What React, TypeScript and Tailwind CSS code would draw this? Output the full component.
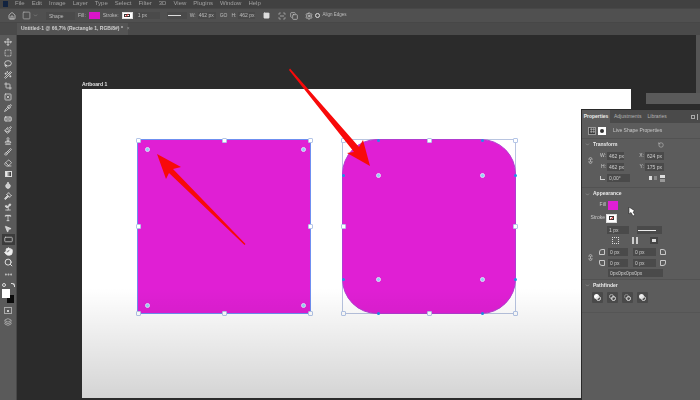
import React from "react";
import {
  Move, SquareDashed, Lasso, Wand2, Crop, SquareX, Pipette, Bandage, Paintbrush, Stamp, Brush, Eraser,
  Droplet, Gavel, Sprout, Type, MousePointer2, RectangleHorizontal, Hand, Search, MoreHorizontal,
  Home, Square, ChevronDown, Settings, RotateCcw, Link2, Layers, Frame, ScanLine, Copy,
} from "lucide-react";

const menus = ["File", "Edit", "Image", "Layer", "Type", "Select", "Filter", "3D", "View", "Plugins", "Window", "Help"];

const tools = [Move, SquareDashed, Lasso, Wand2, Crop, SquareX, Pipette, Bandage, Paintbrush, Stamp, Brush, Eraser];
const tools2 = [Droplet, Gavel, Sprout, Type, MousePointer2];

function Handle({ cls }: { cls: string }) {
  return <span className={`absolute w-[5px] h-[5px] -ml-[2.5px] -mt-[2.5px] bg-white border border-[#b4c6e8] rounded-[1px] ${cls}`} />;
}
function Dot({ cls }: { cls: string }) {
  return <span className={`absolute w-[5px] h-[5px] -ml-[2.5px] -mt-[2.5px] rounded-full bg-[#8fd0f5] border border-[#e6d8f5] ${cls}`} />;
}
function Blue({ cls }: { cls: string }) {
  return <span className={`absolute w-[3px] h-[3px] -ml-[1.5px] -mt-[1.5px] rounded-full bg-[#1e8fe8] ${cls}`} />;
}

function Field({ w, children, cls = "" }: { w: string; children?: React.ReactNode; cls?: string }) {
  return <span className={`${w} ${cls} h-[8px] bg-[#4a4a4a] text-[#cfcfcf] text-[5px] leading-[8px] pl-[2px] block overflow-hidden whitespace-nowrap shrink-0`}>{children}</span>;
}

function Swatch({ w, h }: { w: string; h: string }) {
  return (
    <span className={`${w} ${h} bg-white border border-[#ddd] relative flex items-center justify-center`}>
      <span className="w-[65%] h-[45%] border border-[#333] bg-white" />
      <span className="absolute w-[40%] h-[1px] bg-[#d03030] -rotate-45" />
    </span>
  );
}

function Corner({ r, cls = "" }: { r: string; cls?: string }) {
  return <span className={`block shrink-0 w-[6px] h-[6px] border border-[#c8c8c8] ${r} ${cls}`} />;
}

function Label({ children, w }: { children: React.ReactNode; w: string }) {
  return <span className={`${w} text-right text-[5px] text-[#cccccc] pr-[1px] shrink-0`}>{children}</span>;
}

function Section({ children }: { children: React.ReactNode }) {
  return (
    <div className="h-[11px] flex items-center pl-[3px] gap-[2px] text-[5px] font-bold text-[#e8e8e8]">
      <ChevronDown size={5} className="text-[#bbb]" />
      <span className="ml-[1px]">{children}</span>
    </div>
  );
}

function PathIcon({ cls }: { cls: string }) {
  return (
    <span className="w-[11px] h-[11px] bg-[#4a4a4a] rounded-[1px] flex items-center justify-center relative">
      <span className={`w-[5px] h-[5px] rounded-full absolute left-[2px] top-[2px] ${cls}`} />
      <span className="w-[5px] h-[5px] rounded-full absolute left-[4px] top-[4px] border border-[#ddd]" />
    </span>
  );
}

function Panel() {
  return (
    <div className="absolute right-0 top-[74px] bottom-0 w-[119px] bg-[#5c5c5c] border-l border-t border-[#2a2a2a] flex flex-col font-['Liberation_Sans',sans-serif]">
      <div className="flex flex-col blur-[0.5px]">
        <div className="h-[13px] bg-[#4a4a4a] flex items-stretch text-[5px] text-[#b4b4b4] shrink-0">
          <span className="w-[28px] bg-[#5c5c5c] flex items-center justify-center font-bold text-[#ececec]">Properties</span>
          <span className="ml-[4px] flex items-center">Adjustments</span>
          <span className="ml-[6px] flex items-center">Libraries</span>
          <span className="ml-auto mr-[2px] flex items-center gap-[2px]">
            <span className="w-[4px] h-[4px] border border-[#aaa]" />
            <span className="w-[1px] h-[6px] bg-[#aaa]" />
          </span>
        </div>
        <div className="h-[16px] flex items-center pl-[6px] border-b border-[#525252] shrink-0">
          <span className="w-[8px] h-[8px] bg-[#3a3a3a] border border-[#999] flex items-center justify-center"><Frame size={5} className="text-white" /></span>
          <span className="w-[8px] h-[8px] bg-white ml-[2px] flex items-center justify-center"><span className="w-[4px] h-[4px] rounded-full bg-[#333]" /></span>
          <span className="ml-[7px] text-[5px] text-[#c8c8c8]">Live Shape Properties</span>
        </div>
        <div className="flex items-center justify-between pr-[36px]">
          <Section>Transform</Section>
          <RotateCcw size={6} className="text-[#ccc]" />
        </div>
        <div className="relative shrink-0">
          <Link2 size={7} className="absolute left-[5px] top-[7px] rotate-90 text-[#ddd]" />
          <div className="h-[11px] flex items-center">
            <Label w="w-[25px]">W:</Label><Field w="w-[17px]">462 px</Field>
            <Label w="w-[21px]">X:</Label><Field w="w-[19px]">624 px</Field>
          </div>
          <div className="h-[11px] flex items-center">
            <Label w="w-[25px]">H:</Label><Field w="w-[17px]">462 px</Field>
            <Label w="w-[21px]">Y:</Label><Field w="w-[19px]">175 px</Field>
          </div>
          <div className="h-[12px] flex items-center">
            <span className="w-[25px] flex justify-end pr-[2px]"><span className="w-[5px] h-[4px] border-l border-b border-[#ccc]" /></span>
            <Field w="w-[23px]">0,00°</Field>
            <span className="ml-[19px] w-[3px] h-[4px] bg-[#ddd]" />
            <span className="ml-[2px] w-[3px] h-[4px] bg-[#888]" />
            <span className="ml-[3px] flex flex-col gap-[1px]"><span className="w-[5px] h-[3px] bg-[#ddd]" /><span className="w-[5px] h-[3px] bg-[#999]" /></span>
          </div>
        </div>
        <div className="h-[4px] border-b border-[#525252] shrink-0" />
        <div className="h-[12px] flex items-center"><Section>Appearance</Section></div>
        <div className="h-[10px] flex items-center">
          <span className="w-[26px] text-right text-[5px] text-[#cccccc] pr-[2px]">Fill</span>
          <span className="w-[10px] h-[9px] bg-[#e01fd4]" />
        </div>
        <div className="h-[10px] mt-[3px] flex items-center">
          <span className="w-[24px] text-right text-[5px] text-[#cccccc] pr-[1px]">Stroke</span>
          <Swatch w="w-[11px]" h="h-[9px]" />
        </div>
        <div className="h-[10px] mt-[2px] flex items-center pl-[25px]">
          <Field w="w-[22px]">1 px</Field>
          <span className="ml-[8px] w-[25px] h-[8px] bg-[#4a4a4a] flex items-center pl-[1px]"><span className="w-[18px] h-[1px] bg-[#eee]" /></span>
        </div>
        <div className="h-[11px] flex items-center pl-[30px]">
          <span className="w-[7px] h-[7px] border border-dotted border-[#ddd]" />
          <span className="ml-[13px] w-[6px] h-[7px] border-x-2 border-[#ccc]" />
          <span className="ml-[12px] w-[8px] h-[7px] bg-[#ddd] border-2 border-[#444]" />
        </div>
        <div className="relative mt-[1px] shrink-0">
          <Link2 size={7} className="absolute left-[5px] top-[7px] rotate-90 text-[#ddd]" />
          <div className="h-[10px] flex items-center pl-[17px]">
            <Corner r="rounded-tl-[3px]" />
            <Field w="w-[20px]" cls="ml-[3px]">0 px</Field>
            <Field w="w-[23px]" cls="ml-[5px]">0 px</Field>
            <Corner r="rounded-tr-[3px]" cls="ml-[4px]" />
          </div>
          <div className="h-[11px] flex items-center pl-[17px]">
            <Corner r="rounded-bl-[3px]" />
            <Field w="w-[20px]" cls="ml-[3px]">0 px</Field>
            <Field w="w-[23px]" cls="ml-[5px]">0 px</Field>
            <Corner r="rounded-br-[3px]" cls="ml-[4px]" />
          </div>
        </div>
        <div className="h-[10px] flex items-center pl-[26px]">
          <Field w="w-[55px]">0px0px0px0px</Field>
        </div>
        <div className="h-[2px] border-b border-[#525252] shrink-0" />
        <div className="h-[11px] flex items-center"><Section>Pathfinder</Section></div>
        <div className="h-[13px] flex items-center pl-[10px] gap-[4px]">
          <PathIcon cls="bg-white" />
          <PathIcon cls="border border-[#aaa]" />
          <PathIcon cls="border border-[#888]" />
          <PathIcon cls="bg-[#eee]" />
        </div>
        <div className="h-[9px] border-b border-[#555] shrink-0" />
      </div>
    </div>
  );
}

export default function App() {
  return (
    <div className="w-[700px] h-[400px] relative overflow-hidden flex flex-col bg-[#2b2b2b] font-['Liberation_Sans',sans-serif]">
      {/* menu bar */}
      <div className="h-[8px] bg-[#414141] flex items-center pl-[3px] text-[6px] text-[#a0a0a0] shrink-0 overflow-hidden">
        <span className="w-[5px] h-[6px] bg-[#12233f] mr-[7px]" />
        <div className="flex gap-[7px] -mt-[2px] blur-[0.5px]">
          {menus.map((m) => <span key={m}>{m}</span>)}
        </div>
      </div>
      {/* options bar */}
      <div className="h-[15px] bg-[#505050] border-t border-[#474747] border-b shrink-0">
        <div className="h-full flex items-center text-[5px] text-[#bdbdbd] blur-[0.5px]">
          <Home size={8} className="ml-[8px] text-[#e6e6e6]" />
          <Square size={9} className="ml-[6px] text-[#aaa]" />
          <ChevronDown size={5} className="ml-[2px] text-[#aaa]" />
          <span className="ml-[8px] w-[29px] h-[8px] bg-[#4a4a4a] leading-[8px] pl-[3px]">Shape</span>
          <span className="ml-[3px]">Fill:</span>
          <span className="ml-[3px] w-[11px] h-[7px] bg-[#d814c8]" />
          <span className="ml-[3px]">Stroke:</span>
          <span className="ml-[3px]"><Swatch w="w-[11px]" h="h-[7px]" /></span>
          <span className="ml-[2px] w-[25px] h-[7px] bg-[#4a4a4a] leading-[7px] pl-[3px]">1 px</span>
          <span className="ml-[7px] w-[20px] h-[7px] bg-[#4a4a4a] flex items-center pl-[1px]"><span className="w-[13px] h-[1px] bg-[#ddd]" /></span>
          <span className="ml-[3px]">W:</span>
          <span className="ml-[2px] w-[18px] h-[7px] bg-[#4a4a4a] leading-[7px] pl-[1px]">462 px</span>
          <span className="ml-[4px]">GO</span>
          <span className="ml-[4px]">H:</span>
          <span className="ml-[2px] w-[17px] h-[7px] bg-[#4a4a4a] leading-[7px] pl-[1px]">462 px</span>
          <Square size={7} className="ml-[8px] text-[#ddd] fill-[#ddd]" />
          <ScanLine size={8} className="ml-[8px] text-[#ccc]" />
          <Copy size={8} className="ml-[4px] text-[#ccc]" />
          <Settings size={8} className="ml-[7px] text-[#ddd]" />
          <span className="ml-[2px] w-[5px] h-[5px] rounded-full border border-[#ddd]" />
          <span className="ml-[2px] whitespace-nowrap text-[4.5px]">Align Edges</span>
        </div>
      </div>
      {/* tabs */}
      <div className="h-[12px] bg-[#4a4a4a] flex shrink-0">
        <div className="ml-[17px] w-[111px] bg-[#545454] flex items-center pl-[4px] text-[5px] font-bold text-[#d0d0d0] whitespace-nowrap">
          <span className="blur-[0.4px]">Untitled-1 @ 66,7% (Rectangle 1, RGB/8#) *<span className="ml-[4px] font-normal text-[#999]">×</span></span>
        </div>
      </div>
      {/* work area */}
      <div className="flex-1 flex min-h-0">
        <div className="w-[17px] bg-[#5a5a5a] shrink-0 border-r border-[#474747]">
          <div className="flex flex-col items-center pt-[1px] blur-[0.45px]">
            {tools.map((I, i) => (
              <span key={i} className="h-[11px] flex items-center justify-center"><I size={8} strokeWidth={2.2} className="text-[#e4e4e4]" /></span>
            ))}
            <span className="h-[11px] flex items-center"><span className="w-[7px] h-[6px] border border-[#ddd] bg-gradient-to-r from-white to-[#333]" /></span>
            {tools2.map((I, i) => (
              <span key={i} className="h-[11px] flex items-center justify-center"><I size={8} strokeWidth={2.2} className="text-[#e4e4e4] fill-[#ccc]" /></span>
            ))}
            <span className="h-[11px] w-[13px] bg-[#3c3c3c] flex items-center justify-center"><RectangleHorizontal size={9} className="text-[#ccc]" /></span>
            <span className="h-[11px] mt-[1px] flex items-center"><Hand size={9} strokeWidth={2.2} className="text-[#eee] fill-[#eee]" /></span>
            <span className="h-[11px] flex items-center"><Search size={9} strokeWidth={2.6} className="text-[#e4e4e4]" /></span>
            <span className="h-[11px] mt-[1px] flex items-center"><MoreHorizontal size={9} strokeWidth={3} className="text-[#ccc]" /></span>
            <span className="h-[7px] w-[13px] flex items-center justify-between mt-[1px]">
              <span className="w-[4px] h-[4px] border border-[#ddd] rounded-full" />
              <span className="w-[4px] h-[4px] border-t border-r border-[#ddd] rounded-tr-[3px]" />
            </span>
            <span className="relative w-[13px] h-[15px] mt-[1px]">
              <span className="absolute left-[5px] top-[6px] w-[7px] h-[8px] bg-[#0a0a0a]" />
              <span className="absolute left-0 top-0 w-[8px] h-[9px] bg-white" />
            </span>
            <span className="h-[9px] mt-[2px] flex items-center"><span className="w-[8px] h-[7px] border border-[#aaa] flex items-center justify-center"><span className="w-[2px] h-[2px] bg-[#ccc]" /></span></span>
            <span className="h-[11px] mt-[1px] flex items-center"><Layers size={8} className="text-[#ccc]" /></span>
          </div>
        </div>

        <div className="flex-1 relative pt-[45px] pl-[65px]">
          <div className="h-[9px] text-[5px] leading-[9px] font-bold text-[#e4e4e4] blur-[0.4px]">Artboard 1</div>
          <div className="relative w-[549px] h-[309px] bg-white pt-[50px] pl-[55px] flex gap-[31px] items-start">
            <div className="relative w-[174px] h-[175px] bg-[#e01fd4] border border-[#6f8ff0]">
              <Handle cls="left-0 top-0" /><Handle cls="left-1/2 top-0" /><Handle cls="left-full top-0" />
              <Handle cls="left-0 top-1/2" /><Handle cls="left-full top-1/2" />
              <Handle cls="left-0 top-full" /><Handle cls="left-1/2 top-full" /><Handle cls="left-full top-full" />
              <Dot cls="left-[9px] top-[9px]" /><Dot cls="left-[165px] top-[9px]" />
              <Dot cls="left-[9px] top-[165px]" /><Dot cls="left-[165px] top-[165px]" />
            </div>
            <div className="relative w-[174px] h-[175px] border border-[#b8c4e0]">
              <div className="absolute -inset-px rounded-[35px] bg-[#e01fd4] border border-[#b23cd0]" />
              <Handle cls="left-0 top-0" /><Handle cls="left-1/2 top-0" /><Handle cls="left-full top-0" />
              <Handle cls="left-0 top-1/2" /><Handle cls="left-full top-1/2" />
              <Handle cls="left-0 top-full" /><Handle cls="left-1/2 top-full" /><Handle cls="left-full top-full" />
              <Blue cls="left-[35px] top-0" /><Blue cls="left-[139px] top-0" />
              <Blue cls="left-[35px] top-full" /><Blue cls="left-[139px] top-full" />
              <Blue cls="left-0 top-[35px]" /><Blue cls="left-0 top-[139px]" />
              <Blue cls="left-full top-[35px]" /><Blue cls="left-full top-[139px]" />
              <Dot cls="left-[35px] top-[35px]" /><Dot cls="left-[139px] top-[35px]" />
              <Dot cls="left-[35px] top-[139px]" /><Dot cls="left-[139px] top-[139px]" />
            </div>
            <div className="absolute left-0 right-0 bottom-0 h-[110px] bg-gradient-to-b from-transparent to-[rgba(0,0,0,0.17)] pointer-events-none" />
          </div>
          <div className="absolute right-0 top-0 w-[4px] h-[58px] bg-[#555]" />
          <div className="absolute right-0 top-[58px] w-[54px] h-[11px] bg-[#5a5a5a]" />
          <Panel />
        </div>
      </div>

      {/* cursor */}
      <svg className="absolute left-[628px] top-[207px] w-[8px] h-[10px]" viewBox="0 0 8 10">
        <path d="M1 0 L1 7 L3 5.5 L5 9 L7 8 L5 5 L7 4 Z" fill="#fff" stroke="#222" strokeWidth="0.6" />
      </svg>
      {/* red arrows */}
      <svg className="absolute inset-0 w-[700px] h-[400px] pointer-events-none" viewBox="0 0 700 400">
        <polygon points="157,154 181,167 173,169 245.5,244 244.5,245 169,173 166,179" fill="#f80a0a" />
        <polygon points="370,166 363,140 359,147 290,68.5 289,70 354,152 347,153" fill="#f80a0a" />
      </svg>
    </div>
  );
}
